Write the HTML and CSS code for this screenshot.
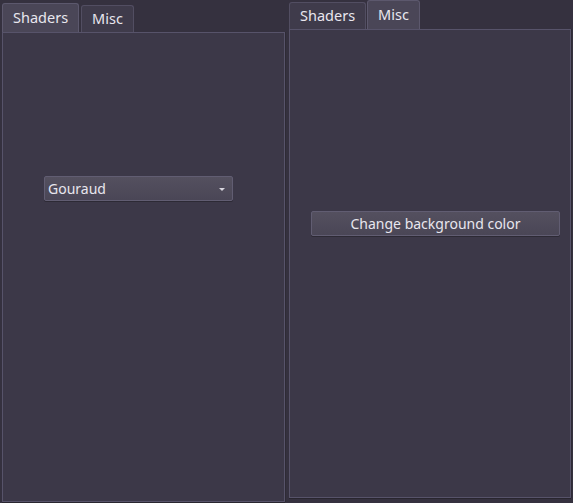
FILE: index.html
```html
<!DOCTYPE html>
<html>
<head>
<meta charset="utf-8">
<link rel="stylesheet" href="styles.css">
</head>
<body>
<div class="app">
  <div class="tabwidget left">
    <div class="tabbar">
      <div class="tab selected">Shaders</div>
      <div class="tab">Misc</div>
    </div>
    <div class="pane pane-left">
      <div class="combo">
        <span>Gouraud</span>
        <span class="arrow"></span>
      </div>
    </div>
  </div>
  <div class="tabwidget right">
    <div class="tabbar tight">
      <div class="tab">Shaders</div>
      <div class="tab selected">Misc</div>
    </div>
    <div class="pane pane-right">
      <div class="button">Change background color</div>
    </div>
  </div>
</div>
</body>
</html>
```
FILE: styles.css
```css
html, body {
  margin: 0;
  padding: 0;
  background: #35313f;
  font-family: "Noto Sans", "Open Sans", sans-serif;
  font-size: 14px;
  color: #e8e6ee;
}
.app {
  display: flex;
  gap: 4px;
  padding-left: 2px;
  width: 573px;
  height: 503px;
  box-sizing: border-box;
}
.tabwidget {
  display: flex;
  flex-direction: column;
}
.tabwidget.left {
  width: 283px;
  margin-top: 3px;
  height: 499px;
}
.tabwidget.right {
  width: 282px;
  margin-top: 0;
  height: 498px;
}
.tabbar {
  display: flex;
  align-items: flex-end;
  gap: 2px;
  height: 29px;
  flex: none;
}
.tabbar.tight { gap: 1px; }
.tab {
  height: 27px;
  box-sizing: border-box;
  padding: 0 10px;
  line-height: 25px;
  background: #3f3b4b;
  border: 1px solid #524e62;
  border-bottom: none;
  border-radius: 3px 3px 0 0;
  color: #e8e6ee;
  font-size: 14.5px;
}
.tab.selected {
  height: 29px;
  line-height: 27px;
  background: #4a4657;
  border-color: #5c586d;
}
.pane {
  flex: 1;
  background: #3c3848;
  border: 1px solid #57536a;
  box-shadow: 0 1px 0 #29262f, 1px 0 0 #2e2b36;
  box-sizing: border-box;
}
.pane-left {
  padding-top: 143px;
  padding-left: 41px;
}
.pane-right {
  padding-top: 181px;
  padding-left: 21px;
}
.combo, .button {
  height: 25px;
  box-sizing: border-box;
  background: linear-gradient(#54505f, #4a4656);
  border: 1px solid #615d72;
  border-radius: 2px;
  box-shadow: 0 1px 0 #2d2a35;
}
.combo {
  width: 189px;
  display: flex;
  align-items: center;
  justify-content: space-between;
  padding: 0 7px 0 3px;
}
.arrow {
  width: 0;
  height: 0;
  border-left: 3px solid transparent;
  border-right: 3px solid transparent;
  border-top: 3px solid #d8d6de;
  margin-top: 1px;
}
.button {
  width: 249px;
  display: flex;
  align-items: center;
  justify-content: center;
}
```
